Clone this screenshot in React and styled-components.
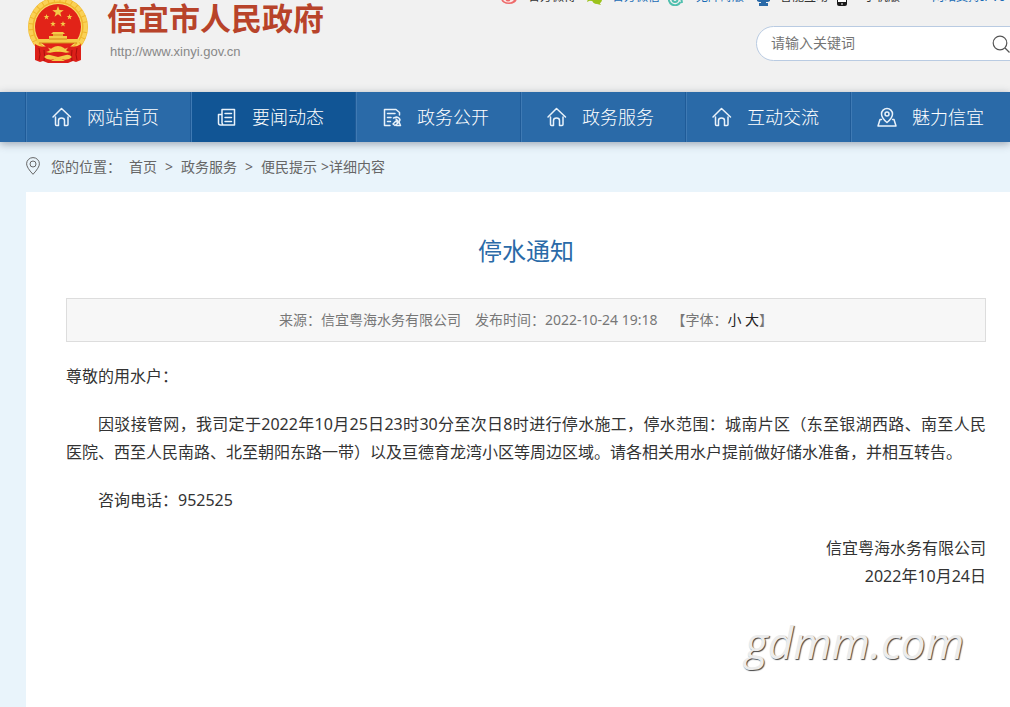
import React from 'react'
import styled, { createGlobalStyle } from 'styled-components'

const theme = {
  blue: '#2a6aa8',
  blueDark: '#115595',
  link: '#1a6cb5',
  red: '#b8432a',
  page: '#e9f4fb',
  grey: '#666666',
}

const topLinks = [
  { label: '官方微博', icon: 'weibo' },
  { label: '官方微信', icon: 'wechat', blue: true },
  { label: '无障碍版', icon: 'access', blue: true },
  { label: '智能互动', icon: 'robot' },
  { label: '手机版', icon: 'phone' },
]

const menu = [
  { label: '网站首页', icon: 'home' },
  { label: '要闻动态', icon: 'news', active: true },
  { label: '政务公开', icon: 'doc' },
  { label: '政务服务', icon: 'home' },
  { label: '互动交流', icon: 'home' },
  { label: '魅力信宜', icon: 'map' },
]

function TopIcon({ name }) {
  return (
    <svg width="18" height="18" viewBox="0 0 18 18" fill="none" aria-hidden="true">
      {name === 'weibo' && (
        <>
          <ellipse cx="9" cy="10.500" rx="8" ry="5.500" fill="#ee6b6b" />
          <ellipse cx="8.500" cy="11" rx="5.500" ry="3.500" fill="#fbeaea" />
          <circle cx="8" cy="11" r="2.500" fill="#ee6b6b" />
        </>
      )}
      {name === 'wechat' && (
        <>
          <ellipse cx="8" cy="8" rx="6" ry="5" fill="#9cc31c" />
          <ellipse cx="13" cy="11.500" rx="5" ry="4.500" fill="#9cc31c" />
          <path d="M4 11l-1 3 4-2zM15 14l2 3-4-1z" fill="#9cc31c" />
        </>
      )}
      {name === 'access' && (
        <>
          <path d="M1.500 8a6 6 0 0 0 11 6" stroke="#4fbfae" strokeWidth="2" />
          <circle cx="7" cy="11.500" r="2.500" stroke="#4fbfae" strokeWidth="2" />
          <path d="M9 9h4l1 6" stroke="#4fbfae" strokeWidth="2" />
        </>
      )}
      {name === 'robot' && <path d="M5 4h13v9l-2 1h-2v1h2v3H7v-3h2v-1H7l-2-1z" fill={theme.blue} />}
      {name === 'phone' && (
        <>
          <rect x="1" y="1" width="10" height="17" rx="2" fill="#1b1b1b" />
          <path d="M2 3h8v11H2z" fill="#fff" />
          <path d="M5 16h2" stroke="#fff" />
        </>
      )}
    </svg>
  )
}

function MenuIcon({ name }) {
  return (
    <svg width="22" height="22" viewBox="0 0 22 22" fill="none" stroke="#e9f2fa" strokeWidth="1.500" strokeLinejoin="round" strokeLinecap="round" aria-hidden="true">
      {name === 'home' && (
        <path d="M2 12l8.500-8.500L19.500 12M4.500 12v7.500q0 1 1 1h2v-5q0-2.500 3-2.500t3 2.500v5h2.500q1 0 1-1V12" />
      )}
      {name === 'news' && (
        <>
          <path d="M6 4.500h12.500v15.500H5.500q2 0 .5-2zM6 9.500H2.500V18q0 2 2 2H7" />
          <path d="M9 8.500h6.500M9 12.500h6.500M9 16.500h6.500" />
        </>
      )}
      {name === 'doc' && (
        <>
          <path d="M9 20.500H3.500v-16H15l3.500 3V10M6.500 8.500H14M6.500 12.500H10M6.500 16.500h3" />
          <path d="M12.500 13l3-1q3 .5 3.500 3l-1 2 1.500 3.500h-4M15 14l2 2M12 19l3-3 2 2-3 2.500z" />
        </>
      )}
      {name === 'map' && (
        <>
          <path d="M11 17.500Q5.500 13 5.500 9a5.500 5.500 0 0 1 11 0q0 4-5.500 8.500z" />
          <circle cx="11" cy="9" r="2" />
          <path d="M5.500 14.500H4l-2 6.500h18l-2-6.500h-1.500" />
        </>
      )}
    </svg>
  )
}

function Emblem() {
  const star = 'M0-5L1.200-1.600 4.800-1.500 1.900.6 2.900 4 0 1.900-2.900 4-1.900.6-4.800-1.500-1.200-1.600z'
  return (
    <svg width="62" height="64" viewBox="0 0 62 64" role="img" aria-label="国徽">
      <circle cx="31" cy="27" r="30" fill="#f0b62c" />
      <circle cx="31" cy="27" r="27.500" fill="none" stroke="#fad155" strokeWidth="4" strokeDasharray="5 1" />
      <circle cx="31" cy="27" r="24" fill="#f9dc6a" />
      <circle cx="31" cy="27" r="23" fill="#e22318" />
      <path d="M8 44q5 4 12 2l4 6h14l4-6q7 2 12-2v16l-5 2-3-1-5 2H21l-5-2-3 1-5-2z" fill="#dc2019" />
      <path d="M12 48q2 7 0 12M17 50q1 6 0 11M50 48q-2 7 0 12M45 50q-1 6 0 11" stroke="#a80f0c" fill="none" />
      <g fill="#f4cb48">
        <path d={star} transform="translate(31 12) scale(1.200)" />
        <path d={star} transform="translate(19.500 17) scale(.6)" />
        <path d={star} transform="translate(42.500 17) scale(.6)" />
        <path d={star} transform="translate(26 24) scale(.6)" />
        <path d={star} transform="translate(36 24) scale(.6)" />
        <path d="M24 34l2-2h10l2 2h-2v2h4v3h12v4H10v-4h12v-3h4v-2z" />
        <path d="M19 52q4-1 6-4 6-4 12 0 2 3 6 4-6 2-12-2-6 4-12 2z" />
        <path d="M17 57q3-3 6-2l8 2 8-2q3-1 6 2-5 5-14 1-9 4-14-1z" />
        <path d="M24 61l7-4 7 4z" />
      </g>
      <path d="M22 39h18M26 35h10" stroke="#d6871c" />
      <path d="M12 43h38" stroke="#d6871c" />
    </svg>
  )
}

export default function App() {
  return (
    <>
      <GlobalStyle />
      <Page>
        <Header>
          <Brand>
            <Emblem />
            <BrandText>
              <SiteName>信宜市人民政府</SiteName>
              <SiteUrl href="#">http://www.xinyi.gov.cn</SiteUrl>
            </BrandText>
          </Brand>
          <Tools>
            <TopBar>
              {topLinks.map((item) => (
                <TopLink key={item.label} href="#" $blue={item.blue}>
                  <IconSlot><TopIcon name={item.icon} /></IconSlot>
                  {item.label}
                </TopLink>
              ))}
              <TopLink href="#" $blue $plain>网站支持IPV6</TopLink>
            </TopBar>
            <Search onSubmit={(e) => e.preventDefault()}>
              <SearchInput type="text" placeholder="请输入关键词" aria-label="请输入关键词" />
              <SearchButton aria-label="搜索">
                <svg width="18" height="18" viewBox="0 0 18 18" fill="none" stroke="#555" strokeWidth="1.200">
                  <circle cx="8" cy="8" r="6.800" />
                  <path d="M13 13l4.500 4.500" />
                </svg>
              </SearchButton>
            </Search>
          </Tools>
        </Header>

        <Nav>
          {menu.map((item) => (
            <NavLink key={item.label} href="#" $active={item.active}>
              <MenuIcon name={item.icon} />
              {item.label}
            </NavLink>
          ))}
        </Nav>

        <Crumbs>
          <svg width="14" height="18" viewBox="0 0 14 18" fill="none" stroke="#666" aria-hidden="true">
            <path d="M7 17.300Q.6 10.500.6 6.800a6.400 6.200 0 0 1 12.800 0Q13.400 10.500 7 17.300z" />
            <circle cx="7" cy="7" r="3" />
          </svg>
          <CrumbLabel>您的位置：</CrumbLabel>
          <a href="#">首页</a>
          <Arrow>&gt;</Arrow>
          <a href="#">政务服务</a>
          <Arrow>&gt;</Arrow>
          <a href="#">便民提示</a>
          <CrumbEnd>&gt;详细内容</CrumbEnd>
        </Crumbs>

        <Article>
          <Title>停水通知</Title>
          <Meta>
            <span>来源：信宜粤海水务有限公司</span>
            <span>发布时间：2022-10-24 19:18</span>
            <span>【字体：<SizeButton>小</SizeButton> <SizeButton>大</SizeButton>】</span>
          </Meta>
          <Paragraph>尊敬的用水户：</Paragraph>
          <Paragraph $indent>
            因驳接管网，我司定于2022年10月25日23时30分至次日8时进行停水施工，停水范围：城南片区（东至银湖西路、南至人民<Word>医院、</Word>西至人民南路、北至朝阳东路一带）以及亘德育龙湾小区等周边区域。请各相关用水户提前做好储水准备，并相互转告。
          </Paragraph>
          <Paragraph $indent>咨询电话：952525</Paragraph>
          <Signature>
            信宜粤海水务有限公司<br />
            2022年10月24日
          </Signature>
          <Watermark>gdmm.com</Watermark>
        </Article>
      </Page>
    </>
  )
}

const GlobalStyle = createGlobalStyle`
  * {
    box-sizing: border-box;
  }
  body {
    margin: 0;
    background: ${theme.page};
    font-family: "Noto Sans", "Noto Sans CJK SC", sans-serif;
    font-size: 14px;
    color: #333;
  }
  a {
    color: inherit;
    text-decoration: none;
  }
  button {
    border: 0;
    padding: 0;
    background: none;
    font: inherit;
    cursor: pointer;
  }
`

const Page = styled.div`
  display: flex;
  flex-direction: column;
  min-height: 100vh;
  overflow: hidden;
`

const Header = styled.header`
  display: flex;
  justify-content: space-between;
  height: 92px;
  padding-left: 27px;
  background: #f1f1f1;
`

const Brand = styled.div`
  display: flex;
  gap: 18px;
`

const BrandText = styled.div`
  display: flex;
  flex-direction: column;
`

const SiteName = styled.h1`
  margin: 0;
  font-size: 31px;
  line-height: 36px;
  font-weight: 700;
  color: ${theme.red};
  white-space: nowrap;
`

const SiteUrl = styled.a`
  padding-left: 3px;
  font-family: "Liberation Sans", sans-serif;
  font-size: 13px;
  line-height: 32px;
  color: #888;
`

const Tools = styled.div`
  display: flex;
  flex-direction: column;
  gap: 20px;
  width: 510px;
  flex-shrink: 0;
`

const TopBar = styled.div`
  display: flex;
  align-items: flex-end;
  height: 6px;
`

const TopLink = styled.a`
  display: flex;
  flex-shrink: 0;
  align-items: center;
  margin-right: 8px;
  padding-left: ${(p) => (p.$plain ? '24px' : '0')};
  font-size: 12px;
  line-height: 18px;
  color: ${(p) => (p.$blue ? theme.link : '#333')};
`

const IconSlot = styled.span`
  display: flex;
  width: 28px;
`

const Search = styled.form`
  display: flex;
  align-items: center;
  justify-content: space-between;
  height: 35px;
  margin-left: 256px;
  margin-right: -20px;
  padding: 0 19px 0 14px;
  border: 1px solid #b9cbe2;
  border-radius: 18px;
  background: #fff;
`

const SearchInput = styled.input`
  flex: 1;
  min-width: 0;
  border: 0;
  padding: 0 0 2px;
  outline: 0;
  background: none;
  font: inherit;
  &::placeholder {
    color: #757575;
    opacity: 1;
  }
`

const SearchButton = styled.button`
  display: flex;
`

const Nav = styled.nav`
  position: relative;
  display: flex;
  height: 50px;
  padding-left: 25px;
  background: ${theme.blue};
  box-shadow: 0 2px 8px rgba(60, 70, 90, 0.45);
`

const NavLink = styled.a`
  display: flex;
  flex: 0 0 165px;
  align-items: center;
  gap: 14px;
  padding: 0 0 2px 25px;
  border-left: 1px solid #1f5b98;
  box-shadow: inset 1px 0 0 #3f7ab4;
  background: ${(p) => (p.$active ? theme.blueDark : 'transparent')};
  font-size: 18px;
  font-weight: 300;
  color: #fff;
`

const Crumbs = styled.div`
  display: flex;
  align-items: center;
  height: 50px;
  padding: 0 0 2px 26px;
  color: ${theme.grey};
`

const CrumbLabel = styled.span`
  margin-left: 11px;
  margin-right: 8px;
`

const Arrow = styled.span`
  width: 24px;
  text-align: center;
`

const CrumbEnd = styled.span`
  margin-left: 4px;
`

const Article = styled.main`
  flex: 1;
  margin-left: 26px;
  padding: 40px 24px 30px 40px;
  background: #fff;
`

const Title = styled.h2`
  margin: 0 0 28px;
  font-size: 24px;
  line-height: 38px;
  font-weight: 400;
  text-align: center;
  color: ${theme.blue};
`

const Meta = styled.div`
  display: flex;
  justify-content: center;
  gap: 14px;
  margin-bottom: 20px;
  border: 1px solid #ddd;
  background: #f7f7f7;
  line-height: 42px;
  color: #777;
`

const SizeButton = styled.button`
  color: #222;
`

const Paragraph = styled.p`
  margin: 0 0 20px;
  font-size: 16px;
  line-height: 28px;
  text-align: justify;
  text-indent: ${(p) => (p.$indent ? '2em' : '0')};
`

const Word = styled.span`
  display: inline-block;
  text-indent: 0;
`

const Signature = styled(Paragraph)`
  text-align: right;
`

const Watermark = styled.div`
  padding-right: 22px;
  font-family: "Open Sans", "Noto Sans", sans-serif;
  font-size: 44px;
  line-height: 64px;
  font-style: italic;
  text-align: right;
  color: #ececec;
  text-shadow: 1px 1px 1px #444;
`
